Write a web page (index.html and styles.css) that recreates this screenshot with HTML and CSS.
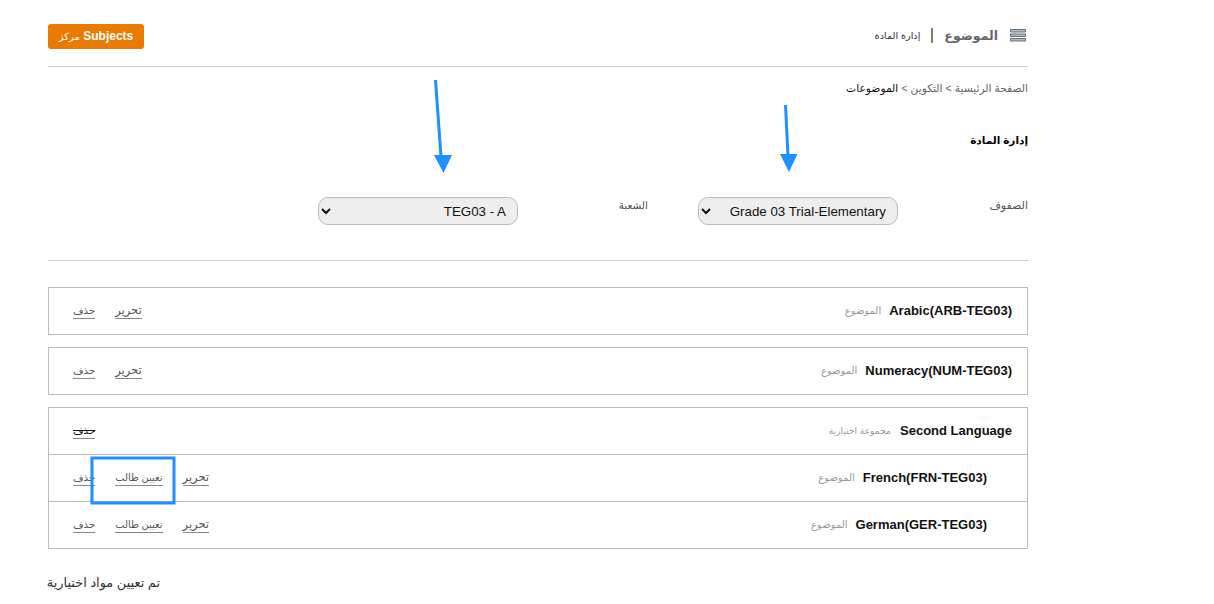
FILE: index.html
```html
<!DOCTYPE html>
<html lang="ar" dir="rtl">
<head>
<meta charset="utf-8">
<title>إدارة المادة</title>
<link rel="stylesheet" href="styles.css">
</head>
<body>
<main class="page">
  <header class="top">
    <div class="heading">
      <svg class="menu-icon" width="16" height="13" viewBox="0 0 16 13"><path d="M0.500 0.500h15v2.500h-15zM0.500 5h15v2.500h-15zM0.500 9.500h15v2.500h-15z" fill="#b4bbc3" stroke="#666e77"/></svg>
      <span class="title">الموضوع</span>
      <span class="divider"></span>
      <span class="sub">إدارة المادة</span>
    </div>
    <a class="btn"><span dir="ltr">Subjects</span> <small>مركز</small></a>
  </header>
  <nav class="crumbs"><span>الصفحة الرئيسية</span> &gt; <span>التكوين</span> &gt; <b>الموضوعات</b></nav>
  <h2 class="section">إدارة المادة</h2>
  <form class="filters">
    <label class="lbl">الصفوف</label>
    <select class="sel"><option>Grade 03 Trial-Elementary</option></select>
    <label class="lbl lbl2">الشعبة</label>
    <select class="sel"><option>TEG03 - A</option></select>
  </form>
  <section class="box">
    <div class="row">
      <div class="name"><b dir="ltr">Arabic(ARB-TEG03)</b><small>الموضوع</small></div>
      <div class="acts"><a class="edit">تحرير</a><a class="del">حذف</a></div>
    </div>
  </section>
  <section class="box">
    <div class="row">
      <div class="name"><b dir="ltr">Numeracy(NUM-TEG03)</b><small>الموضوع</small></div>
      <div class="acts"><a class="edit">تحرير</a><a class="del">حذف</a></div>
    </div>
  </section>
  <section class="box">
    <div class="row">
      <div class="name"><b dir="ltr">Second Language</b><small class="group">مجموعة اختيارية</small></div>
      <div class="acts"><a class="del strike">حذف</a></div>
    </div>
    <div class="row sub-row">
      <div class="name"><b dir="ltr">French(FRN-TEG03)</b><small>الموضوع</small></div>
      <div class="acts"><a class="edit">تحرير</a><a>تعيين طالب</a><a class="del">حذف</a></div>
    </div>
    <div class="row sub-row">
      <div class="name"><b dir="ltr">German(GER-TEG03)</b><small>الموضوع</small></div>
      <div class="acts"><a class="edit">تحرير</a><a>تعيين طالب</a><a class="del">حذف</a></div>
    </div>
  </section>
  <p class="note">تم تعيين مواد اختيارية</p>
</main>
<svg class="overlay" width="1214" height="604" viewBox="0 0 1214 604">
  <path d="M435.500 80L441 157" stroke="#1e90ff" stroke-width="3" fill="none"/>
  <path d="M434 155H452L443.500 173Z" fill="#1e90ff"/>
  <path d="M785.500 105L788 156" stroke="#1e90ff" stroke-width="3" fill="none"/>
  <path d="M780 154H797.500L789 172Z" fill="#1e90ff"/>
  <rect x="92" y="458" width="82" height="45" fill="none" stroke="#1e90ff" stroke-width="3"/>
</svg>
</body>
</html>
```
FILE: styles.css
```css
* { box-sizing: border-box; }
html, body { margin: 0; padding: 0; }
body {
  background: #fff;
  font-family: "Liberation Sans", "DejaVu Sans", sans-serif;
  color: #222;
  position: relative;
  height: 604px;
  overflow: hidden;
}
.page {
  width: 980px;
  margin-right: 186px;
  padding-top: 24px;
}
.top {
  display: flex;
  justify-content: space-between;
  align-items: flex-start;
  height: 43px;
  border-bottom: 1px solid #ccc;
}
.heading {
  display: flex;
  align-items: center;
  height: 22px;
  padding-right: 2px;
}
.menu-icon { margin-left: 12px; }
.title { font-size: 12.500px; font-weight: bold; color: #666; }
.divider { width: 2px; height: 15px; background: #8a7a60; margin: 0 11px; }
.sub { font-size: 9.700px; color: #333; }
.btn {
  width: 96px;
  height: 25px;
  background: #e87b00;
  color: #fff;
  border-radius: 3px;
  font-size: 12px;
  font-weight: bold;
  line-height: 25px;
  text-align: center;
}
.btn small { font-size: 10px; font-weight: normal; }
.crumbs { margin-top: 14px; font-size: 10.700px; line-height: 14px; color: #666; }
.crumbs b { font-weight: normal; color: #111; }
.section { margin: 37px 0 0; font-size: 10.500px; line-height: 16px; font-weight: bold; color: #000; }
.filters {
  display: flex;
  align-items: flex-start;
  margin-top: 49px;
  height: 64px;
  border-bottom: 1px solid #ccc;
}
.lbl { width: 130px; font-size: 11px; line-height: 16px; color: #555; }
.lbl2 { margin-right: 50px; font-size: 10.500px; }
.sel {
  width: 200px;
  height: 28px;
  background: #eee;
  border: 1px solid #bbb;
  border-radius: 10px;
  font-family: "Liberation Sans", sans-serif;
  font-size: 13.330px;
  color: #111;
  padding: 0 7px;
}
.box { border: 1px solid #bbb; margin-top: 12px; }
.filters + .box { margin-top: 26px; }
.row {
  display: flex;
  justify-content: space-between;
  align-items: center;
  height: 47px;
  padding: 0 15px 0 24px;
  border-top: 1px solid #bbb;
}
.row:first-child { border-top: 0; height: 46px; }
.sub-row { padding-right: 40px; }
.name { display: flex; align-items: center; padding-bottom: 2px; }
.name b { font-size: 13px; color: #111; }
.name small { font-size: 10px; color: #999; margin-right: 8px; }
.name small.group { font-size: 9.200px; margin-right: 9px; }
.acts { display: flex; gap: 20px; }
.acts a { font-size: 9.900px; line-height: 15px; color: #555; border-bottom: 1px solid #888; }
.acts a.edit { font-size: 11.500px; line-height: 15px; }
.acts a.del { font-size: 10.200px; }
.acts a.strike { color: #111; text-decoration: line-through; }
.note { margin: 26px 868px 0 0; font-size: 12.900px; line-height: 16px; color: #333; white-space: nowrap; }
.overlay { position: absolute; left: 0; top: 0; pointer-events: none; }
```
